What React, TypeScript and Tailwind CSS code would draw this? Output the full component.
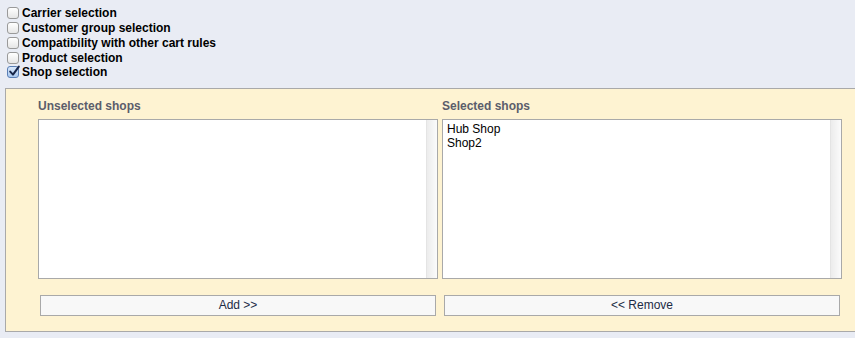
import React from "react";

const font = { fontFamily: '"Liberation Sans", Arial, Helvetica, sans-serif' };

function Box({ checked }: { checked?: boolean }) {
  return (
    <span
      className={
        "relative inline-block w-[12px] h-[12px] rounded-[3px] border shrink-0 " +
        (checked
          ? "border-[#5a7fb5] bg-gradient-to-b from-[#d9e8fb] to-[#a9c8ef]"
          : "border-[#9a9a9a] bg-gradient-to-b from-[#ffffff] to-[#e6e6e6]")
      }
    >
      {checked && (
        <svg className="absolute left-[0px] top-[-2px]" width="13" height="13" viewBox="0 0 13 13">
          <path d="M2.2 6.6 L5 9.6 L10.8 1.6" fill="none" stroke="#17264a" strokeWidth="2" strokeLinecap="round" strokeLinejoin="round" />
        </svg>
      )}
    </span>
  );
}

const items = [
  "Carrier selection",
  "Customer group selection",
  "Compatibility with other cart rules",
  "Product selection",
  "Shop selection",
];

function ListBox({ entries }: { entries: string[] }) {
  return (
    <div className="flex h-[160px] border border-[#a9a9a9] bg-white">
      <div className="flex-1 pl-[4px] pt-[2px] text-[12px] leading-[14px] text-black">
        {entries.map((e) => (
          <div key={e}>{e}</div>
        ))}
      </div>
      <div className="w-[11px] border-l border-[#e4e4e4] bg-gradient-to-r from-[#ececec] to-[#fbfbfb]" />
    </div>
  );
}

export default function App() {
  return (
    <div className="w-[855px] h-[338px] overflow-hidden bg-[#e9ecf4]" style={font}>
      <div className="h-[88px] pt-[6px] pl-[7px]">
        {items.map((t, i) => (
          <div key={t} className="flex items-center h-[14.75px] gap-[3px]">
            <Box checked={i === 4} />
            <span className="text-[12px] font-bold text-black leading-[14px]">{t}</span>
          </div>
        ))}
      </div>
      <div className="ml-[5px] w-[870px] h-[244px] border border-[#a9a9a9] bg-[#fef3d2] pl-[32px] pt-[10px]">
        <div className="grid grid-cols-[400px_400px] gap-x-[4px]">
          <div className="text-[12px] leading-[14px] font-bold text-[#5b5d6b] mb-[6px]">Unselected shops</div>
          <div className="text-[12px] leading-[14px] font-bold text-[#5b5d6b] mb-[6px]">Selected shops</div>
          <ListBox entries={[]} />
          <ListBox entries={["Hub Shop", "Shop2"]} />
          <button className="mt-[16px] ml-[2px] w-[396px] h-[21px] border border-[#a9a9a9] bg-[#f8f8f8] text-[12px] text-[#1c2b45] leading-[19px]">
            Add &gt;&gt;
          </button>
          <button className="mt-[16px] ml-[2px] w-[396px] h-[21px] border border-[#a9a9a9] bg-[#f8f8f8] text-[12px] text-[#1c2b45] leading-[19px]">
            &lt;&lt; Remove
          </button>
        </div>
      </div>
    </div>
  );
}
